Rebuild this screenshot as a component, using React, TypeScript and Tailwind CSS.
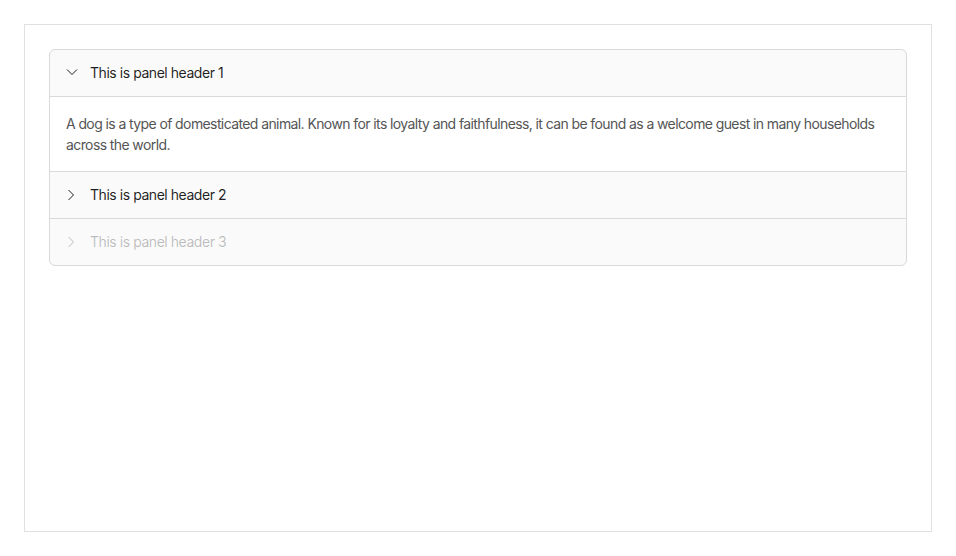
import { useState } from 'react';

type Panel = {
    key: string;
    header: string;
    body?: string;
    disabled?: boolean;
};

const panels: Panel[] = [
    {
        key: '1',
        header: 'This is panel header 1',
        body: 'A dog is a type of domesticated animal. Known for its loyalty and faithfulness, it can be found as a welcome guest in many households across the world.',
    },
    {
        key: '2',
        header: 'This is panel header 2',
        body: 'A dog is a type of domesticated animal. Known for its loyalty and faithfulness, it can be found as a welcome guest in many households across the world.',
    },
    { key: '3', header: 'This is panel header 3', disabled: true },
];

function Arrow({ open }: { open: boolean }) {
    return (
        <svg
            viewBox="0 0 12 12"
            className={open ? 'w-3 h-3 shrink-0 rotate-90' : 'w-3 h-3 shrink-0'}
            fill="none"
            stroke="currentColor"
            strokeWidth="1"
        >
            <path d="M2.5 1 L7.5 6 L2.5 11" />
        </svg>
    );
}

export default function App() {
    const [active, setActive] = useState<string[]>(['1']);

    const toggle = (key: string) => {
        setActive((prev) => (prev.includes(key) ? prev.filter((k) => k !== key) : [...prev, key]));
    };

    return (
        <div className="p-6 bg-white" style={{ fontFamily: 'Inter, "Noto Sans", sans-serif' }}>
            <div className="h-[508px] border border-[#e0e0e0] p-6">
                <div className="border border-[#d9d9d9] rounded-[6px] overflow-hidden bg-[#fafafa]">
                    {panels.map((p, i) => {
                        const open = active.includes(p.key);
                        return (
                            <div key={p.key} className={i > 0 ? 'border-t border-[#d9d9d9]' : ''}>
                                <button
                                    disabled={p.disabled}
                                    onClick={() => toggle(p.key)}
                                    className={`w-full flex items-center gap-3 px-4 py-3 text-left text-sm leading-[22px] tracking-[-0.45px] ${
                                        p.disabled ? 'text-black/25 cursor-not-allowed' : 'text-black/[0.88] cursor-pointer'
                                    }`}
                                >
                                    <Arrow open={open} />
                                    <span>{p.header}</span>
                                </button>
                                {open && p.body && (
                                    <div className="bg-white border-t border-[#d9d9d9] px-4 py-4 text-sm leading-[21px] tracking-[-0.6px] text-[#555]">
                                        {p.body}
                                    </div>
                                )}
                            </div>
                        );
                    })}
                </div>
            </div>
        </div>
    );
}
